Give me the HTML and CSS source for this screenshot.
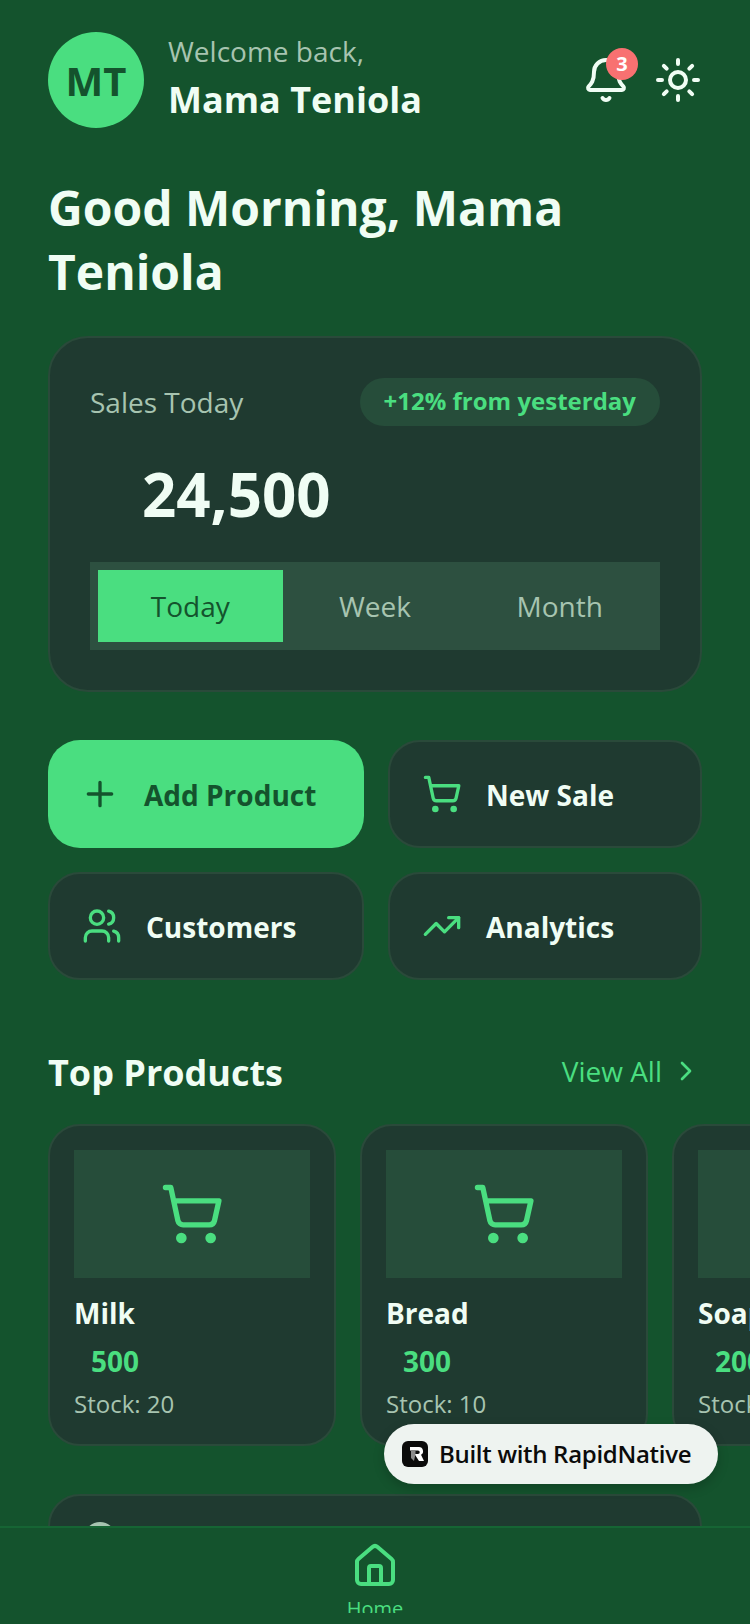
FILE: index.html
```html
<!DOCTYPE html>
<html lang="en">
<head>
    <meta charset="UTF-8">
    <meta name="viewport" content="width=device-width, initial-scale=1.0">
    <title>Mama Teniola Dashboard</title>
    <link rel="stylesheet" href="styles.css">
</head>
<body>
<div class="app">
    <main class="content">
        <header class="header">
            <div class="avatar">MT</div>
            <div class="who">
                <p class="welcome">Welcome back,</p>
                <p class="name">Mama Teniola</p>
            </div>
            <div class="header-icons">
                <div class="bell">
                    <svg class="icon icon-light" viewBox="0 0 24 24"><path d="M10.268 21a2 2 0 0 0 3.464 0"/><path d="M3.262 15.326A1 1 0 0 0 4 17h16a1 1 0 0 0 .74-1.673C19.41 13.956 18 12.499 18 8A6 6 0 0 0 6 8c0 4.499-1.411 5.956-2.738 7.326"/></svg>
                    <span class="bell-count">3</span>
                </div>
                <svg class="icon icon-light" viewBox="0 0 24 24"><circle cx="12" cy="12" r="4"/><path d="M12 2v2M12 20v2M4.93 4.93l1.41 1.41M17.66 17.66l1.41 1.41M2 12h2M20 12h2M6.34 17.66l-1.41 1.41M19.07 4.93l-1.41 1.41"/></svg>
            </div>
        </header>

        <h1 class="greeting">Good Morning, Mama Teniola</h1>

        <section class="sales card">
            <div class="sales-top">
                <span class="sales-label">Sales Today</span>
                <span class="trend">+12% from yesterday</span>
            </div>
            <div class="sales-total">24,500</div>
            <div class="tabs">
                <div class="tab tab-active">Today</div>
                <div class="tab">Week</div>
                <div class="tab">Month</div>
            </div>
        </section>

        <section class="actions">
            <div class="action action-primary">
                <svg class="icon" viewBox="0 0 24 24"><path d="M5 12h14M12 5v14"/></svg>
                <span>Add Product</span>
            </div>
            <div class="action card">
                <svg class="icon icon-green" viewBox="0 0 24 24"><circle cx="8" cy="21" r="1"/><circle cx="19" cy="21" r="1"/><path d="M2.05 2.05h2l2.66 12.42a2 2 0 0 0 2 1.58h9.78a2 2 0 0 0 1.95-1.57l1.65-7.43H5.12"/></svg>
                <span>New Sale</span>
            </div>
            <div class="action card">
                <svg class="icon icon-green" viewBox="0 0 24 24"><path d="M16 21v-2a4 4 0 0 0-4-4H6a4 4 0 0 0-4 4v2"/><path d="M16 3.128a4 4 0 0 1 0 7.744"/><path d="M22 21v-2a4 4 0 0 0-3-3.87"/><circle cx="9" cy="7" r="4"/></svg>
                <span>Customers</span>
            </div>
            <div class="action card">
                <svg class="icon icon-green" viewBox="0 0 24 24"><path d="M16 7h6v6"/><path d="m22 7-8.5 8.5-5-5L2 17"/></svg>
                <span>Analytics</span>
            </div>
        </section>

        <section class="section-head">
            <h2>Top Products</h2>
            <div class="view-all">
                <span>View All</span>
                <svg class="icon-small icon-green" viewBox="0 0 24 24"><path d="m9 18 6-6-6-6"/></svg>
            </div>
        </section>

        <section class="products">
            <div class="product card">
                <div class="product-image">
                    <svg class="icon-large icon-green" viewBox="0 0 24 24"><circle cx="8" cy="21" r="1"/><circle cx="19" cy="21" r="1"/><path d="M2.05 2.05h2l2.66 12.42a2 2 0 0 0 2 1.58h9.78a2 2 0 0 0 1.95-1.57l1.65-7.43H5.12"/></svg>
                </div>
                <p class="product-name">Milk</p>
                <p class="product-price">500</p>
                <p class="product-stock">Stock: 20</p>
            </div>
            <div class="product card">
                <div class="product-image">
                    <svg class="icon-large icon-green" viewBox="0 0 24 24"><circle cx="8" cy="21" r="1"/><circle cx="19" cy="21" r="1"/><path d="M2.05 2.05h2l2.66 12.42a2 2 0 0 0 2 1.58h9.78a2 2 0 0 0 1.95-1.57l1.65-7.43H5.12"/></svg>
                </div>
                <p class="product-name">Bread</p>
                <p class="product-price">300</p>
                <p class="product-stock">Stock: 10</p>
            </div>
            <div class="product card">
                <div class="product-image">
                    <svg class="icon-large icon-green" viewBox="0 0 24 24"><circle cx="8" cy="21" r="1"/><circle cx="19" cy="21" r="1"/><path d="M2.05 2.05h2l2.66 12.42a2 2 0 0 0 2 1.58h9.78a2 2 0 0 0 1.95-1.57l1.65-7.43H5.12"/></svg>
                </div>
                <p class="product-name">Soap</p>
                <p class="product-price">200</p>
                <p class="product-stock">Stock: 15</p>
            </div>
        </section>

        <section class="next card">
            <div class="next-dot"></div>
        </section>
    </main>

    <nav class="tabbar">
        <svg class="icon icon-green" viewBox="0 0 24 24"><path d="M15 21v-8a1 1 0 0 0-1-1h-4a1 1 0 0 0-1 1v8"/><path d="M3 10a2 2 0 0 1 .709-1.528l7-5.999a2 2 0 0 1 2.582 0l7 5.999A2 2 0 0 1 21 10v9a2 2 0 0 1-2 2H5a2 2 0 0 1-2-2z"/></svg>
        <span class="tabbar-label">Home</span>
    </nav>

    <div class="built">
        <svg class="built-logo" viewBox="0 0 26 26"><rect width="26" height="26" rx="6" fill="#0b0b0b"/><path d="M8 6h9a4.200 4.200 0 0 1 2 7.800L22 20h-5l-4.500-7H16a1.500 1.500 0 0 0 0-3.500H8z" fill="#fff"/><path d="M9 9.500h4.500V13l-1.500 7-3-3z" fill="#8a8a8a"/></svg>
        <span>Built with RapidNative</span>
    </div>
</div>
</body>
</html>
```

FILE: styles.css
```css
* {
    box-sizing: border-box;
}
html, body {
    margin: 0;
    padding: 0;
}
body {
    font-family: "Open Sans", sans-serif;
    background-color: #14532d;
    color: #f0fdf4;
}
p, h1, h2 {
    margin: 0;
}
.app {
    position: relative;
    width: 750px;
    height: 1624px;
    display: flex;
    flex-direction: column;
    overflow: hidden;
}
.content {
    flex: 1;
    min-height: 0;
    overflow: hidden;
    padding: 32px 48px 0;
}
.icon, .icon-small, .icon-large {
    fill: none;
    stroke: currentColor;
    stroke-width: 2;
    stroke-linecap: round;
    stroke-linejoin: round;
    flex-shrink: 0;
}
.icon {
    width: 48px;
    height: 48px;
}
.icon-small {
    width: 32px;
    height: 32px;
}
.icon-large {
    width: 64px;
    height: 64px;
}
.icon-light {
    color: #f0fdf4;
}
.icon-green {
    color: #4ade80;
}
.card {
    background-color: #1f3a30;
    border: 2px solid #2a4a3a;
}

/* header */
.header {
    display: flex;
    align-items: center;
    gap: 24px;
}
.avatar {
    width: 96px;
    height: 96px;
    border-radius: 50%;
    background-color: #4ade80;
    color: #14532d;
    font-size: 40px;
    font-weight: 700;
    display: flex;
    align-items: center;
    justify-content: center;
}
.who {
    flex: 1;
    padding-bottom: 4px;
}
.welcome {
    font-size: 28px;
    line-height: 38px;
    color: #a7c4b0;
}
.name {
    font-size: 36px;
    line-height: 48px;
    font-weight: 700;
    margin-top: 6px;
}
.header-icons {
    display: flex;
    align-items: center;
    gap: 24px;
}
.bell {
    position: relative;
    width: 48px;
    height: 48px;
}
.bell-count {
    position: absolute;
    top: -8px;
    right: -8px;
    width: 32px;
    height: 32px;
    border-radius: 50%;
    background-color: #f87171;
    color: #fff;
    font-size: 20px;
    font-weight: 700;
    line-height: 32px;
    text-align: center;
}
.greeting {
    font-size: 48px;
    line-height: 64px;
    font-weight: 700;
    margin-top: 48px;
}

/* sales card */
.sales {
    margin-top: 32px;
    height: 356px;
    padding: 40px;
    border-radius: 40px;
}
.sales-top {
    display: flex;
    align-items: center;
    justify-content: space-between;
}
.sales-label {
    font-size: 28px;
    color: #a7c4b0;
}
.trend {
    height: 48px;
    line-height: 46px;
    padding: 0 24px;
    border-radius: 24px;
    background-color: #264d3a;
    color: #4ade80;
    font-size: 24px;
    font-weight: 700;
}
.sales-total {
    font-size: 60px;
    line-height: 72px;
    font-weight: 700;
    margin-top: 32px;
    padding-left: 52px;
}
.tabs {
    display: flex;
    margin-top: 32px;
    padding: 8px;
    background-color: #2d5040;
}
.tab {
    flex: 1;
    height: 72px;
    line-height: 72px;
    text-align: center;
    font-size: 28px;
    color: #a7c4b0;
}
.tab-active {
    background-color: #4ade80;
    color: #14532d;
}

/* quick actions */
.actions {
    display: grid;
    grid-template-columns: 316px 1fr;
    grid-auto-rows: 108px;
    gap: 24px;
    margin-top: 48px;
}
.action {
    display: flex;
    align-items: center;
    gap: 24px;
    padding: 0 32px;
    border-radius: 32px;
    font-size: 28px;
    font-weight: 700;
}
.action span {
    padding-top: 2px;
}
.action-primary {
    background-color: #4ade80;
    color: #14532d;
}
.action .icon {
    width: 40px;
    height: 40px;
}

/* top products */
.section-head {
    display: flex;
    align-items: center;
    justify-content: space-between;
    margin-top: 65px;
}
.section-head h2 {
    font-size: 36px;
    line-height: 56px;
    font-weight: 700;
}
.view-all {
    display: flex;
    align-items: center;
    gap: 8px;
    padding-bottom: 4px;
    font-size: 28px;
    color: #4ade80;
}
.products {
    display: flex;
    gap: 24px;
    margin-top: 23px;
    width: 702px;
    overflow: hidden;
}
.product {
    flex: 0 0 288px;
    height: 322px;
    padding: 24px;
    border-radius: 32px;
}
.product-image {
    height: 128px;
    background-color: #264d3a;
    display: flex;
    align-items: center;
    justify-content: center;
}
.product-name {
    font-size: 28px;
    line-height: 40px;
    font-weight: 700;
    margin-top: 15px;
}
.product-price {
    font-size: 28px;
    line-height: 40px;
    font-weight: 700;
    color: #4ade80;
    margin-top: 8px;
    padding-left: 17px;
}
.product-stock {
    font-size: 24px;
    line-height: 32px;
    color: #a7c4b0;
    margin-top: 7px;
}
.next {
    height: 200px;
    margin-top: 48px;
    padding: 26px 34px;
    border-radius: 32px;
}
.next-dot {
    width: 32px;
    height: 32px;
    border-radius: 50%;
    background-color: #a7c4b0;
}

/* bottom bar */
.tabbar {
    flex: 0 0 98px;
    height: 98px;
    position: relative;
    display: flex;
    flex-direction: column;
    align-items: center;
    padding-top: 14px;
    background-color: #14532d;
    border-top: 2px solid #166534;
    overflow: hidden;
}
.tabbar-label {
    font-size: 20px;
    line-height: 28px;
    color: #4ade80;
    margin-top: 5px;
    height: 18px;
    overflow: hidden;
}

/* floating badge */
.built {
    position: absolute;
    left: 384px;
    top: 1424px;
    width: 334px;
    height: 60px;
    display: flex;
    align-items: center;
    gap: 11px;
    padding: 0 18px;
    border-radius: 30px;
    background-color: #eef3f0;
    color: #0b0b0b;
    font-size: 24px;
    font-weight: 600;
    letter-spacing: -0.3px;
    box-shadow: 0 4px 12px rgba(0, 0, 0, 0.2);
    white-space: nowrap;
}
.built span {
    padding-bottom: 2px;
}
.built-logo {
    width: 26px;
    height: 26px;
    flex-shrink: 0;
}
```
